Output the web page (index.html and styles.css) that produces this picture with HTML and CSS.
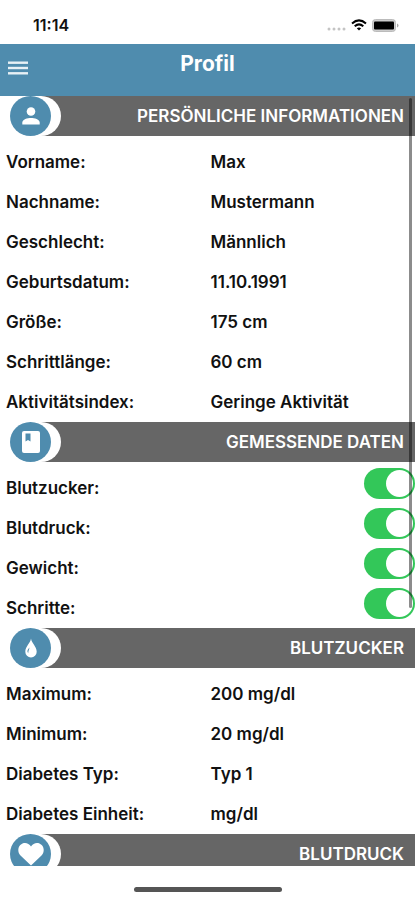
FILE: index.html
```html
<!DOCTYPE html>
<html lang="de">
<head>
  <meta charset="UTF-8">
  <meta name="viewport" content="width=device-width, initial-scale=1">
  <title>Profil</title>
  <link rel="stylesheet" href="styles.css">
</head>
<body>
<div class="app">
  <div class="status">
    <span class="time">11:14</span>
    <div class="status_icons">
      <svg width="19" height="4" viewBox="0 0 19 4" fill="#c4c4c4">
        <circle cx="2" cy="2" r="1.5"/><circle cx="7" cy="2" r="1.5"/><circle cx="12" cy="2" r="1.5"/><circle cx="17" cy="2" r="1.5"/>
      </svg>
      <svg class="wifi" width="16" height="12" viewBox="0 0 16 12" fill="none" stroke="#000" stroke-width="2">
        <path d="M1 4.500 Q8 -1.800 15 4.500"/>
        <path d="M3.700 7.300 Q8 3.500 12.300 7.300"/>
        <path d="M8 11.500 L5.800 9.300 Q8 7.600 10.200 9.300 Z" fill="#000" stroke="none"/>
      </svg>
      <svg width="27" height="13" viewBox="0 0 27 13">
        <rect x="0.500" y="0.500" width="23" height="12" rx="3" fill="#ccc" stroke="#bbb"/>
        <rect x="2" y="2.500" width="20" height="8" rx="1" fill="#000"/>
        <path d="M25 4.500 v4 q1.500 -0.500 1.500 -2 t-1.500 -2" fill="#aaa"/>
      </svg>
    </div>
  </div>

  <header class="topbar">
    <button class="menu" type="button" aria-label="Menü">
      <svg width="20" height="14" viewBox="0 0 20 14" fill="#e8f1f6">
        <rect y="0.500" width="20" height="2.400"/><rect y="5.800" width="20" height="2.400"/><rect y="11.100" width="20" height="2.400"/>
      </svg>
    </button>
    <h1>Profil</h1>
  </header>

  <main class="content">
    <section>
      <div class="section_head">
        <span class="badge"><span class="icon">
          <svg width="18" height="18" viewBox="0 0 18 18" fill="#fff">
            <circle cx="9" cy="4.500" r="4.300"/>
            <path d="M0.300 17.500 v-2 C0.300 12.300 5.500 11 9 11 s8.700 1.300 8.700 4.500 v2 z"/>
          </svg>
        </span></span>
        <h2>PERSÖNLICHE INFORMATIONEN</h2>
      </div>
      <dl class="rows">
        <div class="row"><dt>Vorname:</dt><dd>Max</dd></div>
        <div class="row"><dt>Nachname:</dt><dd>Mustermann</dd></div>
        <div class="row"><dt>Geschlecht:</dt><dd>Männlich</dd></div>
        <div class="row"><dt>Geburtsdatum:</dt><dd>11.10.1991</dd></div>
        <div class="row"><dt>Größe:</dt><dd>175 cm</dd></div>
        <div class="row"><dt>Schrittlänge:</dt><dd>60 cm</dd></div>
        <div class="row"><dt>Aktivitätsindex:</dt><dd>Geringe Aktivität</dd></div>
      </dl>
    </section>

    <section>
      <div class="section_head">
        <span class="badge"><span class="icon">
          <svg width="18" height="22" viewBox="0 0 18 22">
            <rect width="18" height="22" rx="2" fill="#fff"/>
            <path d="M3.500 2.500 h5 v8 l-2.500 -1.500 l-2.500 1.500 z" fill="#4f8cae"/>
          </svg>
        </span></span>
        <h2>GEMESSENDE DATEN</h2>
      </div>
      <div class="rows">
        <div class="row"><label for="zucker">Blutzucker:</label><input class="switch" type="checkbox" id="zucker" checked></div>
        <div class="row"><label for="druck">Blutdruck:</label><input class="switch" type="checkbox" id="druck" checked></div>
        <div class="row"><label for="gewicht">Gewicht:</label><input class="switch" type="checkbox" id="gewicht" checked></div>
        <div class="row"><label for="schritte">Schritte:</label><input class="switch" type="checkbox" id="schritte" checked></div>
      </div>
    </section>

    <section>
      <div class="section_head">
        <span class="badge"><span class="icon">
          <svg width="12" height="20" viewBox="0 0 12 20">
            <path d="M6 0.500 C6.500 5 11.700 8.500 11.700 13.700 A5.700 5.700 0 0 1 0.300 13.700 C0.300 8.500 5.500 5 6 0.500 z" fill="#fff"/>
            <path d="M4.500 9.500 C2.500 11.500 1.700 13.500 3.200 15.200 C3.300 13 4 12 4.500 9.500 z" fill="#4f8cae"/>
          </svg>
        </span></span>
        <h2>BLUTZUCKER</h2>
      </div>
      <dl class="rows">
        <div class="row"><dt>Maximum:</dt><dd>200 mg/dl</dd></div>
        <div class="row"><dt>Minimum:</dt><dd>20 mg/dl</dd></div>
        <div class="row"><dt>Diabetes Typ:</dt><dd>Typ 1</dd></div>
        <div class="row"><dt>Diabetes Einheit:</dt><dd>mg/dl</dd></div>
      </dl>
    </section>

    <section>
      <div class="section_head">
        <span class="badge"><span class="icon">
          <svg width="26" height="24" viewBox="0 0 26 24">
            <path d="M13 23.500 L2.500 13.500 C-0.500 10.500 -0.300 5.500 2.300 3 C5.500 -0.200 10.500 0.500 13 4.500 C15.500 0.500 20.500 -0.200 23.700 3 C26.300 5.500 26.500 10.500 23.500 13.500 z" fill="#fff"/>
          </svg>
        </span></span>
        <h2>BLUTDRUCK</h2>
      </div>
    </section>
    <span class="scroll_thumb"></span>
  </main>

  <div class="home"><span class="home_bar"></span></div>
</div>
</body>
</html>
```

FILE: styles.css
```css
* {
  box-sizing: border-box;
}
body {
  margin: 0;
  background: #fff;
  color: #111;
  font-family: Inter, "Liberation Sans", sans-serif;
  font-size: 17px;
  font-weight: 600;
}
h1, h2, dl, dd {
  margin: 0;
}
.app {
  display: flex;
  flex-direction: column;
  height: 100vh;
}
.status {
  display: flex;
  justify-content: space-between;
  align-items: center;
  height: 44px;
  padding: 6px 16px 0 33px;
}
.time {
  font-size: 16px;
}
.status_icons {
  display: flex;
  align-items: center;
  gap: 5px;
}
.status_icons svg:first-child {
  margin-top: 8px;
}
.topbar {
  display: grid;
  grid-template-columns: 36px 1fr 36px;
  height: 52px;
  background: #4f8cae;
  color: #fff;
}
.menu {
  display: flex;
  align-items: center;
  padding: 0 8px 4px;
  border: 0;
  background: none;
}
.topbar h1 {
  font-size: 21px;
  line-height: 40px;
  font-weight: 700;
  text-align: center;
}
.content {
  position: relative;
  flex: 1;
  min-height: 0;
  overflow: hidden;
}
.section_head {
  display: flex;
  align-items: center;
  justify-content: space-between;
  height: 40px;
  padding-right: 11px;
  background: #666;
  color: #fff;
}
.section_head h2 {
  font-size: 17px;
  font-weight: 600;
}
.badge {
  width: 61px;
  height: 40px;
  padding-left: 10px;
  border-radius: 0 20px 20px 0;
  background: #fff;
}
.icon {
  display: flex;
  align-items: center;
  justify-content: center;
  width: 41px;
  height: 40px;
  border-radius: 50%;
  background: #4f8cae;
}
.rows {
  padding-top: 6px;
}
.row {
  display: flex;
  justify-content: space-between;
  height: 40px;
  padding-left: 6px;
  line-height: 40px;
}
.row dd {
  width: 50%;
}
.switch {
  appearance: none;
  width: 51px;
  height: 31px;
  margin: 0;
  padding: 2px;
  border-radius: 16px;
  background: #ddd;
}
.switch::before {
  content: "";
  display: block;
  width: 27px;
  height: 27px;
  border-radius: 50%;
  background: #fff;
}
.switch:checked {
  background: #33c759;
}
.switch:checked::before {
  margin-left: auto;
}
.scroll_thumb {
  position: absolute;
  top: 2px;
  right: 3px;
  width: 3px;
  height: 510px;
  border-radius: 2px;
  background: rgba(0, 0, 0, 0.45);
}
.home {
  display: flex;
  justify-content: center;
  height: 34px;
  padding-top: 21px;
}
.home_bar {
  width: 148px;
  height: 5px;
  border-radius: 3px;
  background: #555;
}
```
